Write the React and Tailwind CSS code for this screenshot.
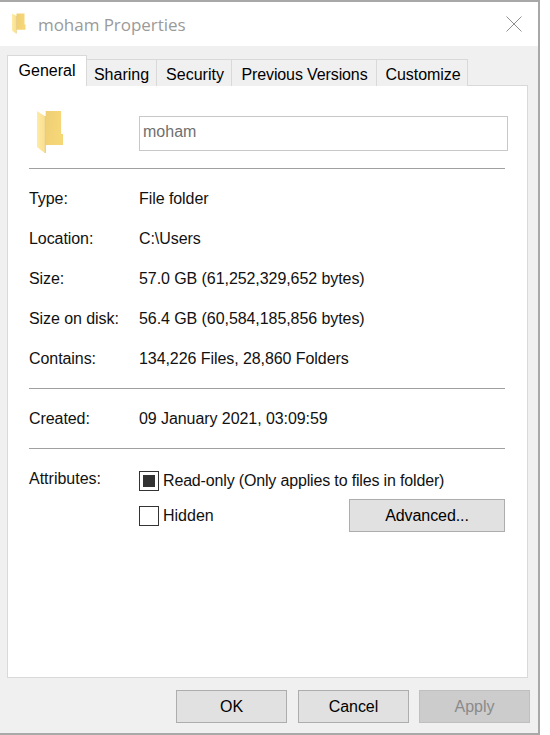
const sans = "font-['Liberation_Sans',Arial,sans-serif]";

function Folder({ className }) {
  return (
    <svg viewBox="0 0 28 44" preserveAspectRatio="none" className={`shrink-0 ${className}`}>
      <defs>
        <linearGradient id="fb" x1="0" y1="0" x2="1" y2="0.2">
          <stop offset="0" stopColor="#eccb72" />
          <stop offset="1" stopColor="#f6d778" />
        </linearGradient>
        <linearGradient id="ff" x1="0" y1="0" x2="1" y2="0">
          <stop offset="0" stopColor="#fdeba6" />
          <stop offset="1" stopColor="#fbdf8c" />
        </linearGradient>
      </defs>
      <path d="M1 1H25V24H27V35H9V1Z" fill="url(#fb)" />
      <path d="M0 1L8 6V43L0 37Z" fill="url(#ff)" />
      <path d="M8 6L9 6V43H8Z" fill="#e0b95c" />
    </svg>
  );
}

function Tab({ children, className }) {
  return (
    <div className={`h-[27px] overflow-hidden flex items-center justify-center bg-[#f0f0f0] border border-b-0 border-l-0 border-[#d9d9d9] text-[16px] text-black pt-[3px] ${className}`}>
      {children}
    </div>
  );
}

function Row({ label, value, className = "h-10" }) {
  return (
    <div className={`flex items-center text-[16px] text-[#111] tracking-[-0.07px] ${className}`}>
      <div className="w-[110px] shrink-0">{label}</div>
      <div>{value}</div>
    </div>
  );
}

function Btn({ children, className = "" }) {
  return (
    <button className={`h-[33px] border border-[#adadad] bg-[#e1e1e1] text-[16px] text-black tracking-[-0.07px] flex items-center justify-center ${className}`}>
      {children}
    </button>
  );
}

export default function App() {
  return (
    <div className={`w-[550px] h-[735px] bg-white overflow-hidden ${sans}`}>
      <div className="w-[540px] h-[735px] border-t-2 border-r-2 border-b-2 border-[#a8a8a8] flex flex-col">
        <div className="h-[44px] bg-white flex items-center justify-between pl-[12px] pr-[16px] shrink-0">
          <div className="flex items-center gap-[12px]">
            <Folder className="w-[14px] h-[21px] -mt-[2px]" />
            <span className="font-['Open_Sans',sans-serif] text-[17px] text-[#9a9a9a] tracking-[-0.05px] mt-[1px]">moham Properties</span>
          </div>
          <svg viewBox="0 0 16 16" className="w-[16px] h-[16px] -mt-[1px]">
            <path d="M0.5 0.5L15.5 15.5M15.5 0.5L0.5 15.5" stroke="#8f8f8f" strokeWidth="1" fill="none" />
          </svg>
        </div>
        <div className="flex-1 bg-[#f0f0f0] pl-[7px] pr-[11px] pt-[10px] flex flex-col">
          <div className="flex items-end h-[30px] relative z-10 -mb-px">
            <div className="w-[80px] h-[31px] bg-white border border-b-0 border-[#d9d9d9] flex items-center justify-center text-[16px] text-black">General</div>
            <Tab className="w-[70px]">Sharing</Tab>
            <Tab className="w-[75px] pl-[2px]">Security</Tab>
            <Tab className="w-[145px] pl-[1px] tracking-[-0.12px]">Previous Versions</Tab>
            <Tab className="w-[91px] pl-[2px] tracking-[-0.07px]">Customize</Tab>
          </div>
          <div className="w-[521px] h-[593px] bg-white border border-[#d9d9d9] pl-[21px] pr-[21px]">
            <div className="flex items-start h-[82px]">
              <Folder className="w-[27px] h-[44px] ml-[8px] mt-[24px]" />
              <div className="ml-[75px] mt-[30px] w-[369px] h-[35px] shrink-0 border border-[#c8c8c8] flex items-center pl-[3px] pb-[3px] text-[16px] text-[#6f6f6f]">moham</div>
            </div>
            <div className="w-[476px] h-px bg-[#a0a0a0]" />
            <div className="pt-[10px] pb-[9px] w-[476px]">
              <Row label="Type:" value="File folder" />
              <Row label="Location:" value="C:\Users" />
              <Row label="Size:" value="57.0 GB (61,252,329,652 bytes)" />
              <Row label="Size on disk:" value="56.4 GB (60,584,185,856 bytes)" />
              <Row label="Contains:" value="134,226 Files, 28,860 Folders" />
            </div>
            <div className="w-[476px] h-px bg-[#a0a0a0]" />
            <div className="pt-[10px] pb-[9px]">
              <Row label="Created:" value="09 January 2021, 03:09:59" />
            </div>
            <div className="w-[476px] h-px bg-[#a0a0a0]" />
            <div className="flex w-[476px] pt-[20px] text-[16px] text-[#111]">
              <div className="w-[110px] shrink-0 leading-[19px]">Attributes:</div>
              <div className="flex-1 pt-[1px]">
                <div className="flex items-center h-[21px] gap-[4px]">
                  <div className="w-[20px] h-[20px] border border-[#333] flex items-center justify-center">
                    <div className="w-[12px] h-[12px] bg-[#333]" />
                  </div>
                  <span className="tracking-[-0.16px]">Read-only (Only applies to files in folder)</span>
                </div>
                <div className="flex items-center justify-between mt-[8px]">
                  <div className="flex items-center gap-[4px]">
                    <div className="w-[20px] h-[20px] border border-[#333]" />
                    <span>Hidden</span>
                  </div>
                  <Btn className="w-[156px]">Advanced...</Btn>
                </div>
              </div>
            </div>
          </div>
          <div className="flex justify-end mt-[12px] -mr-[3px]">
            <Btn className="w-[111px]">OK</Btn>
            <Btn className="w-[111px] ml-[11px]">Cancel</Btn>
            <button className="w-[111px] ml-[10px] h-[33px] border border-[#bfbfbf] bg-[#cccccc] text-[16px] text-[#8a8a8a] flex items-center justify-center">Apply</button>
          </div>
        </div>
      </div>
    </div>
  );
}
